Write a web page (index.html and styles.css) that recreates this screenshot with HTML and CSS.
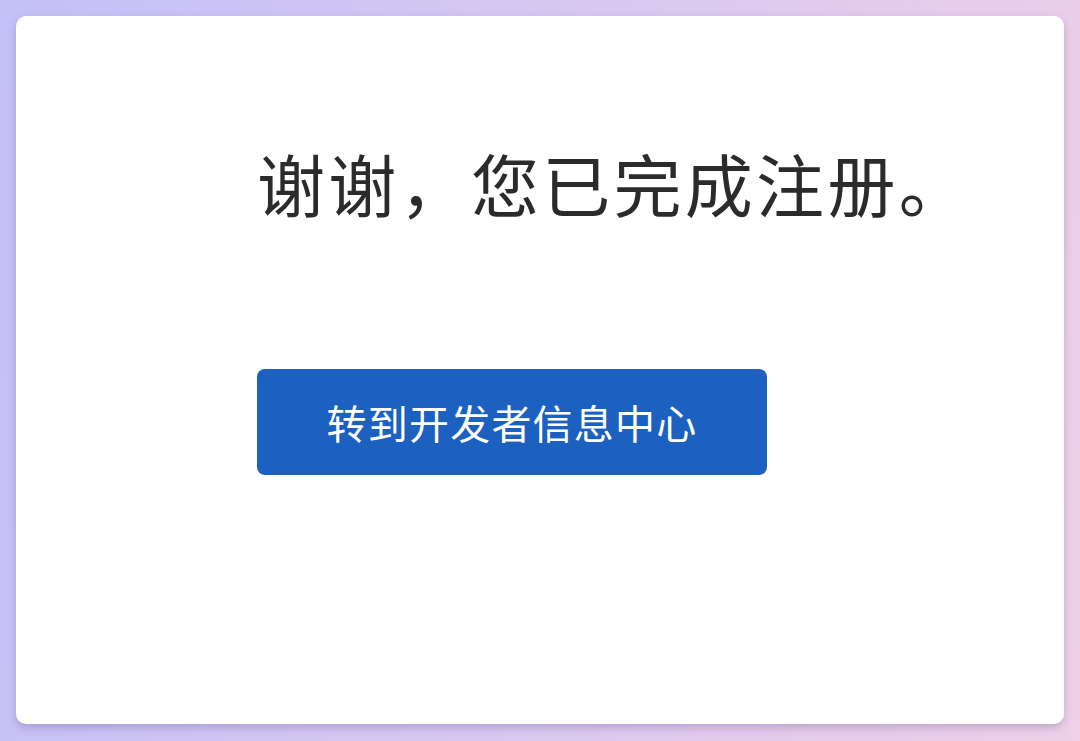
FILE: index.html
```html
<!DOCTYPE html>
<html lang="zh-CN">
<head>
<meta charset="utf-8">
<link rel="stylesheet" href="styles.css">
<title>注册完成</title>
</head>
<body>
<main class="card">
  <h1 class="title">谢谢，您已完成注册。</h1>
  <a class="btn" href="#">转到开发者信息中心</a>
</main>
</body>
</html>
```
FILE: styles.css
```css
html, body {
  margin: 0;
  height: 100%;
}
body {
  background: linear-gradient(100deg, #c3c0f8 0%, #d8c8f0 50%, #efd0e8 100%);
  padding: 16px;
  box-sizing: border-box;
  font-family: "Noto Sans CJK SC", "Noto Sans", sans-serif;
}
.card {
  background: #ffffff;
  border-radius: 10px;
  height: 708px;
  box-sizing: border-box;
  padding: 122px 0 0 241px;
  display: flex;
  flex-direction: column;
  align-items: flex-start;
  box-shadow: 0 4px 8px rgba(80, 60, 120, 0.25);
}
.title {
  margin: 0;
  font-size: 68px;
  font-weight: 400;
  line-height: 90px;
  color: #2b2b2b;
  letter-spacing: 3.3px;
}
.btn {
  margin-top: 141px;
  width: 510px;
  height: 106px;
  border-radius: 8px;
  background: #1c61c0;
  color: #ffffff;
  text-decoration: none;
  font-size: 40px;
  letter-spacing: 1.2px;
  display: flex;
  align-items: center;
  justify-content: center;
}
```
